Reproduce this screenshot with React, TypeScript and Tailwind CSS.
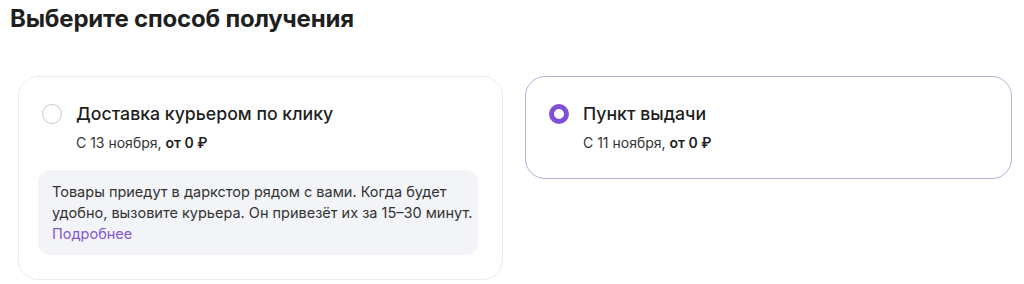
import React from "react";

export default function App() {
  return (
    <div className="w-[1024px] h-[284px] bg-white overflow-hidden" style={{ fontFamily: "Inter, 'Noto Sans', sans-serif" }}>
      <h1 className="pl-[10px] pt-[3px] text-[24px] leading-[32px] font-bold text-[#1f1f1f] tracking-[-0.2px]">
        Выберите способ получения
      </h1>
      <div className="grid grid-cols-[485px_487px] gap-[22px] pl-[18px] mt-[41px] items-start">
        <div className="rounded-[20px] border border-[#ececec] pt-[24px] pl-[23px] pr-[24px] pb-[24px]">
          <div className="flex items-start">
            <div className="w-[20px] h-[20px] rounded-full border border-[#c9c9c9] mt-[3px] shrink-0" />
            <div className="ml-[14px]">
              <div className="text-[17.7px] leading-[26px] font-medium text-[#1f1f1f]">Доставка курьером по клику</div>
              <div className="mt-[6px] text-[14px] leading-[20px] text-[#333]">
                С 13 ноября, <span className="font-semibold text-[#1f1f1f]">от 0 ₽</span>
              </div>
            </div>
          </div>
          <div className="mt-[17px] -ml-[4px] w-[440px] rounded-[12px] bg-[#f2f4f7] pl-[14px] pr-[4px] py-[11px] text-[14.5px] leading-[21px] text-[#333]">
            Товары приедут в даркстор рядом с вами. Когда будет удобно, вызовите курьера. Он привезёт их за 15–30 минут.
            <div className="text-[#8358d2]">Подробнее</div>
          </div>
        </div>
        <div className="rounded-[20px] border border-[#bcaed6] pt-[24px] pl-[23px] pb-[25px]">
          <div className="flex items-start">
            <div className="w-[20px] h-[20px] rounded-full border-[5px] border-[#7f4fd6] mt-[3px] shrink-0" />
            <div className="ml-[14px]">
              <div className="text-[17.7px] leading-[26px] font-medium text-[#1f1f1f]">Пункт выдачи</div>
              <div className="mt-[6px] text-[14px] leading-[20px] text-[#333]">
                С 11 ноября, <span className="font-semibold text-[#1f1f1f]">от 0 ₽</span>
              </div>
            </div>
          </div>
        </div>
      </div>
    </div>
  );
}
